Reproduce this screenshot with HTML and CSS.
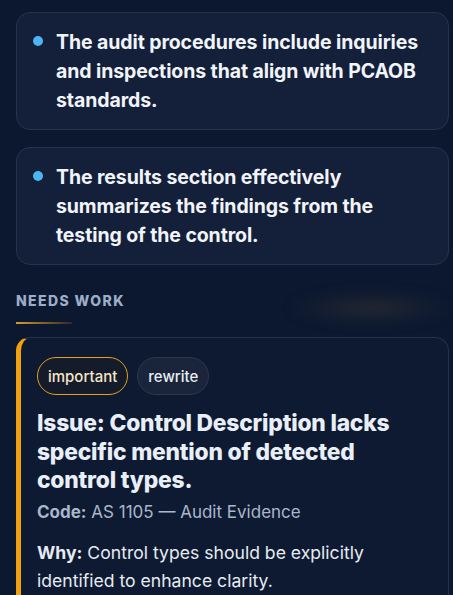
FILE: index.html
```html
<!DOCTYPE html>
<html>
<head>
<meta charset="utf-8">
<link rel="stylesheet" href="styles.css">
</head>
<body>
<div class="page">
  <div class="point">
    <span class="dot"></span>
    <p class="point-text">The audit procedures include inquiries and inspections that align with PCAOB standards.</p>
  </div>
  <div class="point">
    <span class="dot"></span>
    <p class="point-text">The results section effectively summarizes the findings from the testing of the control.</p>
  </div>

  <div class="section-head">
    <h2 class="section-title">NEEDS WORK</h2>
    <div class="section-rule"></div>
    <div class="glow"></div>
  </div>

  <div class="issue">
    <div class="tags">
      <span class="tag tag-important">important</span>
      <span class="tag tag-plain">rewrite</span>
    </div>
    <h3 class="issue-title">Issue: Control Description lacks specific mention of detected control types.</h3>
    <p class="code"><b>Code:</b> AS 1105 — Audit Evidence</p>
    <p class="why"><b>Why:</b> Control types should be explicitly identified to enhance clarity.</p>
  </div>
</div>
</body>
</html>
```

FILE: styles.css
```css
* { box-sizing: border-box; }
html, body {
  margin: 0;
  padding: 0;
  background: #0b1830;
  font-family: Inter, "Noto Sans", "Liberation Sans", sans-serif;
  color: #eef2f8;
}
.page {
  padding: 12px 4px 0 16px;
  display: flex;
  flex-direction: column;
}
.point {
  display: flex;
  align-items: flex-start;
  gap: 13px;
  background: #142039;
  border: 1px solid #26334c;
  border-radius: 14px;
  padding: 15px 12px 14px 16px;
  margin-bottom: 17px;
}
.dot {
  flex: none;
  width: 10px;
  height: 10px;
  border-radius: 50%;
  background: #4cb6f5;
  margin-top: 8px;
  margin-left: 0;
}
.point-text {
  margin: 0;
  font-size: 19.5px;
  font-weight: 700;
  line-height: 29px;
  color: #f1f4f9;
  letter-spacing: -0.1px;
}
.section-head {
  position: relative;
  padding-top: 10px;
}
.section-title {
  margin: 0;
  font-size: 14px;
  font-weight: 800;
  letter-spacing: 1.4px;
  color: #9eadc7;
  line-height: 18px;
}
.section-rule {
  margin-top: 12px;
  width: 56px;
  height: 2px;
  background: linear-gradient(90deg, #d89a2a, rgba(216,154,42,0.15));
}
.glow {
  position: absolute;
  left: 270px;
  top: 8px;
  width: 170px;
  height: 36px;
  border-radius: 50%;
  background: radial-gradient(ellipse at center, rgba(60,56,50,0.55), rgba(40,40,45,0) 70%);
  filter: blur(6px);
}
.issue {
  margin-top: 13px;
  background: #0e1a31;
  border: 1px solid #25324a;
  border-left: 5px solid #f2a20f;
  border-radius: 14px 14px 0 0;
  padding: 19px 16px 0 16px;
  min-height: 260px;
}
.tags {
  display: flex;
  gap: 9px;
}
.tag {
  display: inline-flex;
  align-items: center;
  height: 38px;
  padding: 0 10px;
  border-radius: 19px;
  font-size: 15px;
  font-weight: 500;
}
.tag-important {
  border: 1.5px solid #e39f1e;
  color: #f6e5c8;
  background: #141c2c;
}
.tag-plain {
  border: 1px solid #2b3850;
  background: #1a253b;
  color: #e9eef5;
}
.issue-title {
  margin: 14px 0 0 0;
  font-size: 22.8px;
  font-weight: 800;
  line-height: 28.5px;
  color: #e9eff8;
  letter-spacing: -0.2px;
}
.code {
  margin: 3px 0 0 0;
  font-size: 17px;
  line-height: 29px;
  color: #aab6ca;
}
.code b { font-weight: 700; }
.why {
  margin: 12px 0 0 0;
  font-size: 17.6px;
  line-height: 28px;
  color: #e6ebf3;
}
.why b { font-weight: 700; }
```
